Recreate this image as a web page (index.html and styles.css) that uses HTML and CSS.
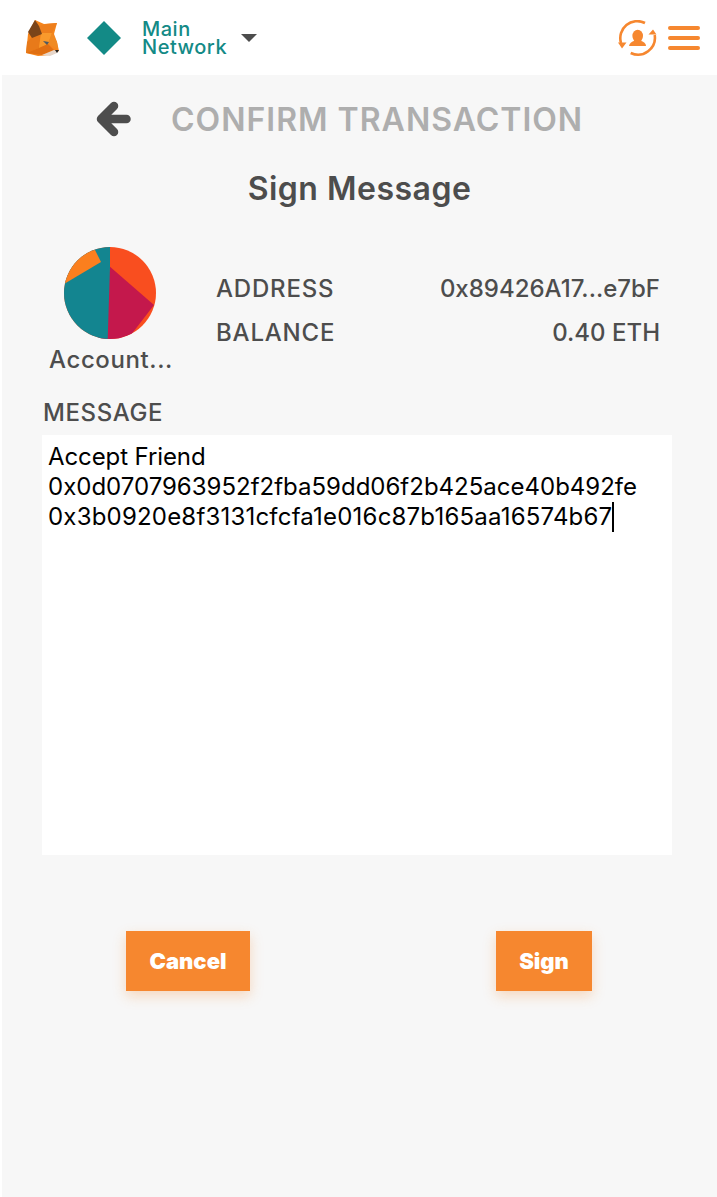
FILE: index.html
```html
<!DOCTYPE html>
<html lang="en">
<head>
<meta charset="utf-8">
<title>Sign Message</title>
<link rel="stylesheet" href="styles.css">
</head>
<body>
<header class="topbar">
  <svg class="fox" viewBox="0 0 36 36" width="36" height="36">
    <polygon points="4,14 11,0 20,4 33,3 30,14 33,22 35,31 27,35 14,36 2,33 3,24" fill="#f6851b"/>
    <polygon points="15,6 22,4 33,3 28,13 20,14 17,13" fill="#ee7f1c"/>
    <polygon points="8,17 17,13 15,28 2,33 3,22" fill="#e87a1a"/>
    <polygon points="17,13 28,13 24,24 15,28" fill="#f99a2c"/>
    <polygon points="28,13 33,22 34,29 24,24" fill="#f08a22"/>
    <polygon points="15,28 24,24 30,30 18,35 2,33" fill="#e06f12"/>
    <polygon points="11,0 4,12 8,18 18,14 15,6" fill="#7a4419"/>
    <polygon points="19,21 25,22 23,25" fill="#4b5a66"/>
    <polygon points="18,35 30,30 34,31 33,33 26,36" fill="#e6d6ca"/>
    <polygon points="31,30 35,30 33,33" fill="#222"/>
  </svg>
  <svg class="diamond" viewBox="0 0 34 34" width="34" height="34"><polygon points="17,0 34,17 17,34 0,17" fill="#138a86"/></svg>
  <div class="network">Main<br>Network</div>
  <div class="caret"></div>
  <div class="spacer"></div>
  <svg class="switch" viewBox="0 0 40 38" width="40" height="38" fill="none" stroke="#f6872f" stroke-width="2.6">
    <path d="M3 23 A17 17 0 0 1 27 3"/>
    <path d="M36.7 15 A17 17 0 0 1 12.7 33"/>
    <polygon points="0,22.5 8.5,22.5 4,28.5" fill="#f6872f" stroke="none"/>
    <polygon points="30.5,14.5 38.5,14.5 35,9.5" fill="#f6872f" stroke="none"/>
    <ellipse cx="19.7" cy="16" rx="5.3" ry="6.2" fill="#f6872f" stroke="none"/>
    <path d="M11 26 Q11.5 22 17 20.5 L22 20.5 Q28 22 28 26 Z" fill="#f6872f" stroke="none"/>
  </svg>
  <div class="burger"><span class="bar"></span><span class="bar"></span><span class="bar"></span></div>
</header>
<main class="app">
  <div class="title-row">
    <svg class="back" viewBox="0 0 36 36" width="36" height="36"><path d="M19 5 L6 18 L19 31 M7 18 L31.5 18" fill="none" stroke="#4d4d4d" stroke-width="8.5" stroke-linecap="round" stroke-linejoin="round"/></svg>
    <h1 class="confirm">CONFIRM TRANSACTION</h1>
  </div>
  <h2 class="sign-title">Sign Message</h2>
  <section class="account">
    <div class="identity">
      <svg class="avatar" viewBox="0 0 92 92" width="92" height="92">
        <defs><clipPath id="disc"><circle cx="46" cy="46" r="46"/></clipPath></defs>
        <g clip-path="url(#disc)">
          <rect width="92" height="92" fill="#f94e1f"/>
          <polygon points="46,19.7 90,58 67.7,87 44,96 34,92" fill="#c4184c"/>
          <polygon points="46,-5 46,19.7 43.7,92 0,92 0,-5" fill="#138590"/>
          <polygon points="31,3 37,15 0,37 0,20 15,5" fill="#fb7f1e"/>
        </g>
      </svg>
      <div class="account-name">Account...</div>
    </div>
    <dl class="details">
      <div class="detail"><dt>ADDRESS</dt><dd>0x89426A17...e7bF</dd></div>
      <div class="detail"><dt>BALANCE</dt><dd>0.40 ETH</dd></div>
    </dl>
  </section>
  <div class="msg-label">MESSAGE</div>
  <div class="message"><span class="msg-head">Accept Friend</span><br>0x0d0707963952f2fba59dd06f2b425ace40b492fe<br><span class="msg-tail">0x3b0920e8f3131cfcfa1e016c87b165aa16574b67</span><span class="cursor"></span></div>
  <div class="actions">
    <button class="btn btn-cancel">Cancel</button>
    <button class="btn btn-sign">Sign</button>
  </div>
</main>
</body>
</html>
```
FILE: styles.css
```css
* { box-sizing: border-box; }
html, body { margin: 0; padding: 0; height: 100%; background: #fff; }
body { display: flex; flex-direction: column; font-family: "Inter", "Liberation Sans", sans-serif; color: #4d4d4d; overflow: hidden; }
.topbar { height: 75px; display: flex; align-items: center; padding: 0 17px 0 24px; flex: none; }
.fox { display: block; margin-right: 27px; }
.diamond { display: block; margin-right: 21px; }
.network { color: #138a86; font-size: 20px; letter-spacing: .5px; line-height: 18px; font-weight: 500; width: 99px; white-space: nowrap; }
.caret { width: 0; height: 0; border-left: 8px solid transparent; border-right: 8px solid transparent; border-top: 8px solid #4d4d4d; margin-top: 1px; }
.spacer { flex: 1; }
.switch { display: block; margin: 3px 10px 0 0; }
.burger { width: 32px; display: flex; flex-direction: column; gap: 6px; }
.bar { display: block; height: 4px; background: #f6872f; border-radius: 2px; }
.app { flex: 1; margin-left: 2px; background: #f7f7f7; display: flex; flex-direction: column; }
.title-row { display: flex; align-items: center; height: 88px; padding: 0 0 0 93px; }
.back { display: block; margin-right: 40px; }
.confirm { margin: 0; font-size: 32px; letter-spacing: 1px; font-weight: 600; color: #aeaeae; white-space: nowrap; }
.sign-title { margin: 8px 0 0; text-align: center; font-size: 32px; letter-spacing: .5px; line-height: 36px; font-weight: 600; color: #4d4d4d; }
.account { display: flex; margin-top: 40px; }
.identity { width: 214px; padding-left: 47px; flex: none; }
.avatar { display: block; margin-left: 15px; }
.account-name { font-size: 24px; letter-spacing: .6px; line-height: 28px; margin-top: 7px; font-weight: 500; white-space: nowrap; }
.details { margin: 28px 57px 0 0; flex: 1; }
.detail { display: flex; justify-content: space-between; height: 44px; font-size: 24px; line-height: 28px; font-weight: 500; }
.detail dt { letter-spacing: .8px; }
.detail dd { margin: 0; }
.msg-label { margin: 25px 0 0 41px; font-size: 24px; letter-spacing: .6px; line-height: 28px; font-weight: 500; }
.message { margin: 8px 0 0 40px; width: 630px; height: 420px; background: #fff; color: #000; padding: 7px 6px; font-size: 24px; line-height: 30px; font-family: "Inter", sans-serif; white-space: nowrap; }
.msg-head { letter-spacing: -.1px; }
.msg-tail { letter-spacing: .2px; }
.cursor { display: inline-block; width: 2px; height: 30px; background: #000; vertical-align: -7px; }
.actions { display: flex; margin-top: 76px; padding-left: 124px; }
.btn { height: 60px; border: 0; background: #f6872f; color: #fff; font-family: "Inter", sans-serif; font-weight: 900; font-size: 22px; box-shadow: 0 5px 12px rgba(246,135,47,.28); padding: 0; }
.btn-cancel { width: 124px; }
.btn-sign { width: 96px; margin-left: 246px; }
```
